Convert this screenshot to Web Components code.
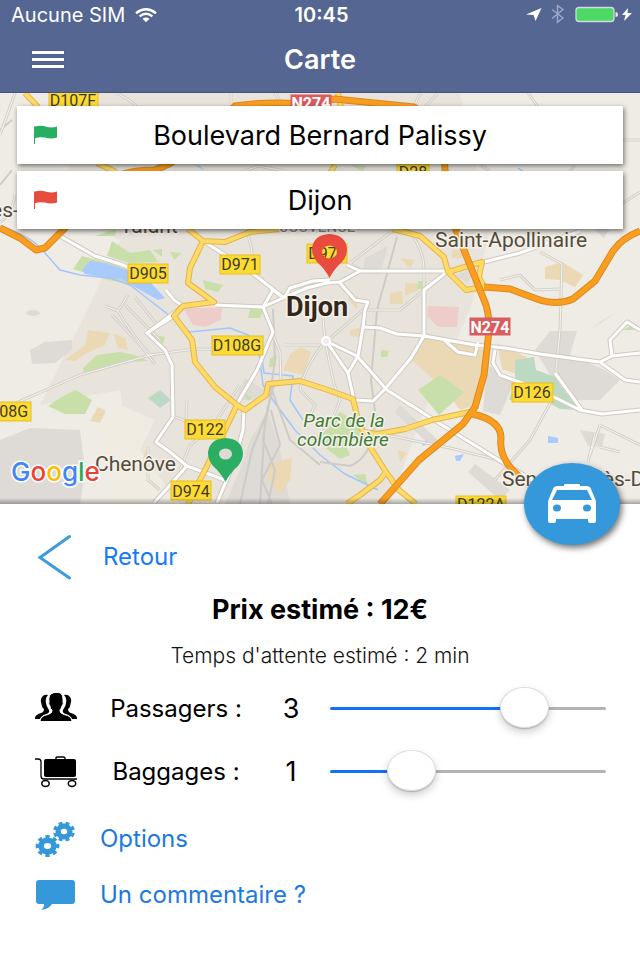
<!DOCTYPE html>
<html lang="fr">
<head>
<meta charset="utf-8">
<meta name="viewport" content="width=device-width, initial-scale=1">
<title>Carte</title>
<style>
  body { margin: 0; background: #fff; color: #000; font-family: Inter, "Liberation Sans", sans-serif; }
</style>
</head>
<body>
<taxi-app></taxi-app>

<script>
const define = (name, html, setup) => {
  const template = document.createElement('template');
  template.innerHTML = html;
  customElements.define(name, class extends HTMLElement {
    constructor() {
      super();
      this.attachShadow({ mode: 'open' }).append(template.content.cloneNode(true));
    }
    connectedCallback() { if (setup) setup(this, this.shadowRoot); }
  });
};

define('status-bar', `
<style>
  :host { display: grid; grid-template-columns: 1fr auto 1fr; align-items: center; height: 30px; padding: 0 8px 0 11px; font-size: 20px; line-height: 24px; color: #fff; }
  .side { display: flex; align-items: center; gap: 10px; }
  .end { justify-content: flex-end; }
  .time { font-weight: 600; }
  svg { display: block; }
</style>
<div class="side"><span>Aucune SIM</span>
  <svg width="22" height="15" viewBox="0 0 22 15" fill="none" stroke="#fff" stroke-width="2.4" aria-hidden="true"><path d="M1 5.2Q11-2.6 21 5.2M4.600 8.400Q11 3.200 17.400 8.400"/><path d="M7.500 10.800Q11 8 14.500 10.800L11 14.200Z" fill="#fff" stroke="none"/></svg>
</div>
<span class="time">10:45</span>
<div class="side end">
  <svg width="106" height="22" viewBox="0 3 106 22" aria-hidden="true">
    <path d="M0 13.500L15.500 7L9.500 20L7.600 14Z" fill="#fff"/>
    <path d="M26 8.500L37 17L31.500 21.300V4.700L37 8.500L26 17.500" fill="none" stroke="#9ba6cb" stroke-width="1.500"/>
    <rect x="50" y="6.500" width="38" height="14" rx="3" fill="#4cd964" stroke="#d3d8e8" stroke-width="1.300"/>
    <path d="M89.500 11Q92 11 92 13.500T89.500 16Z" fill="#e4e7f0"/>
    <path d="M102 7L96 14H99.500L98 20L106 12H101.500Z" fill="#fff"/>
  </svg>
</div>`);

define('nav-bar', `
<style>
  :host { display: grid; grid-template-columns: 64px 1fr 64px; align-items: center; height: 62px; padding-bottom: 3px; box-sizing: border-box; color: #fff; }
  button { display: flex; flex-direction: column; gap: 4px; width: 32px; margin-left: 32px; padding: 0; border: 0; background: none; cursor: pointer; }
  i { display: block; width: 100%; height: 3px; background: #fff; box-shadow: 0 0 1px #1d3f86; }
  h1 { margin: 0; text-align: center; font-size: 27px; line-height: 32px; font-weight: 600; }
</style>
<button aria-label="Menu"><i></i><i></i><i></i></button>
<h1><slot></slot></h1>`);

define('address-field', `
<style>
  :host { display: flex; align-items: center; height: 58px; padding: 0 17px; background: #fff; box-shadow: 1px 2px 5px rgba(0,0,0,.55); box-sizing: border-box; }
  svg { flex: none; color: var(--flag); }
  input { flex: 1; min-width: 0; height: 100%; padding: 0 24px 0 0; border: 0; outline: 0; background: none; font: inherit; font-size: 27px; text-align: center; color: #000; }
</style>
<svg width="24" height="20" viewBox="0 0 24 20" aria-hidden="true"><path d="M.5 19V1.500" stroke="currentColor"/><path d="M1 1.500Q7 0 13 2Q18 3.200 23 1.500V12.500Q17 14.500 11 12.500Q5 11.500 1 13.200Z" fill="currentColor"/></svg>
<input>`, (host, root) => {
  const input = root.querySelector('input');
  input.value = host.getAttribute('value');
  input.setAttribute('aria-label', host.getAttribute('label'));
});

define('city-map', `
<style>
  :host { display: block; position: relative; min-height: 412px; overflow: hidden; background: #ece8e0; border-top: 1px solid #43527f; box-sizing: border-box; }
  svg { position: absolute; inset: 0; width: 100%; height: 100%; }
  .fields { position: relative; display: grid; gap: 7px; padding: 13px 17px; }
  text { font-family: Roboto, "Liberation Sans", sans-serif; }
  .badge rect { fill: #fddb31; stroke: #e5bd24; }
  .badge text { font-size: 16px; fill: #3e3b2b; text-anchor: middle; }
  .badge .red { fill: #d95c5f; stroke: #d95c5f; }
  .badge .white { fill: #fff; font-weight: 700; }
  .place { font-size: 21px; fill: #554b3c; stroke: #f4f1ea; stroke-width: 3px; paint-order: stroke; }
  .city { font-size: 27px; font-weight: 700; fill: #332719; }
  .park { font-size: 19px; font-style: italic; fill: #3f7c35; text-anchor: middle; }
  .google { font-family: Inter, sans-serif; font-size: 26px; font-weight: 500; stroke: #fff; stroke-width: 3px; paint-order: stroke; }
  .edge { fill: none; stroke-linejoin: round; }
</style>
<svg viewBox="0 93 640 411" preserveAspectRatio="xMidYMid slice" role="img" aria-label="Carte de Dijon">
  <defs>
    <g id="minor">
      <path d="M15 93L0 135M117 93L132 102L140 110M231 93V107M275 93L284 107M425 107L438 93M415 107Q417 96 422 93M528 93L538 107M620 140H640M245 171L258 166L285 171M480 165L490 171M570 171L575 165M15 195Q12 215 0 222"/>
      <path d="M246 229Q252 245 253 260L258 277M395 229L350 263M408 229Q424 250 424 268L424 288M350 263L360 270M620 205L640 192M540 252L562 264L560 330L556 370L568 395"/>
      <path d="M112 315L140 345L155 364M118 311Q135 340 154 358M125 305L160 340M135 297L157 325M105 306L118 311L128 295M0 410L80 375L150 355L195 349L240 350L265 345"/>
      <path d="M173 416L186 421L187 400M148 446L148 480L160 490M240 385L210 430L190 445L180 470M285 345H320M281 384L280 352L273 335M325 341Q303 370 300 390L315 405L308 420M334 384L325 341L323 318M327 341L363 310M334 384L340 400L330 425L315 440"/>
      <path d="M362 430L450 448L510 463M552 400L530 440L495 480M640 445L600 425M595 433L588 462M600 425L590 455M620 452L600 447M365 310H400L424 290M500 280L520 275L535 290L560 289"/>
    </g>
    <g id="white">
      <path d="M60 236L95 256L120 264L160 280M166 290L174 300L183 306M215 305L263 307L283 298L307 288L327 283L340 282L360 271L448 271M183 306L146 334M174 316L147 333L165 350L172 365L173 417L156 442L170 452L187 466L225 480M203 241L225 255L256 276L284 298M273 290L263 307L273 332L257 370L237 404M244 409L243 430L235 460L217 503M187 466L154 503"/>
      <path d="M284 298L290 288L313 281L330 280M273 290L284 298M340 283L355 300L368 302L365 310L363 327L358 356L348 373L354 400L373 401L385 389L411 358L424 336L424 290L448 271M347 265L360 271"/>
      <path d="M363 327L380 328L397 334L424 336L475 345L505 348L540 354L600 362L612 356L640 353M600 362L625 380L640 382M326 341L357 356L387 390L450 430L510 467L555 493M326 341L348 373M484 262L520 253L580 231M444 340L458 352L475 355L478 342M495 350L493 363L500 375L535 388L560 400L580 410L602 414L640 410M555 373L582 410M612 356L610 340L627 322L640 330"/>
    </g>
    <g id="yellow">
      <path d="M25 93L38 107M97 163L116 172M338 93L341 107M335 165L330 173M188 229L203 241L190 268L188 283L214 302L183 306L174 316L192 340L195 362L215 387L237 405L225 430L203 474L188 504M203 241L225 242L250 232L280 229M237 405L245 410L266 395L268 384L300 381L325 389L353 399L358 420L370 447L386 472L399 490L416 504M363 432L378 434L405 429L432 420L470 412M386 472L380 480L360 495L347 504M393 229L420 236L444 257L448 272L482 262L479 277L484 287L466 290L448 272"/>
    </g>
    <g id="orange">
      <path d="M0 228L20 238L36 250L45 248L64 229L110 180Q125 170 155 170L171 163L235 106Q270 101 300 104L335 99L414 107Q445 125 445 170L456 230L484 300Q491 315 488 340L484 375L475 407L463 424L419 460L380 504M484 287L510 289L537 299Q557 306 573 299L595 281L613 251Q622 238 640 231M472 414Q501 420 501 438Q498 461 524 480L545 500"/>
    </g>
  </defs>
  <rect y="93" width="640" height="411" fill="#efece5"/>
  <path d="M75 93H460L490 230L470 310L420 420L390 504H180L130 455L120 390L40 405L85 315L120 240L65 210Z" fill="#e8e4dc"/>
  <path d="M120 405L155 420L140 450L165 485V504H110V455L95 430Z" fill="#f0ece2"/>
  <g fill="#dedad5">
    <path d="M0 440L30 428L80 430L85 470L80 504H0Z"/>
    <path d="M30 350L45 342L72 340V350L55 363L32 364Z"/><ellipse cx="33" cy="313" rx="7" ry="3"/><path d="M245 378L265 390L255 400H235ZM250 440L268 410L280 450L290 504H225L240 470ZM550 331H577L570 355L605 370L620 380L600 400L565 400L535 350ZM487 365L515 380L500 415L483 411ZM475 464L510 490L500 500L468 472ZM580 430L605 434L602 447L588 446ZM365 258L388 246L380 275L363 270ZM595 230L612 225L604 238ZM455 275L475 268L468 283ZM400 405L440 442L430 445L395 413Z"/>
  </g>
  <g fill="#ead9b4">
    <path d="M88 330L110 333L105 345L85 354L75 361L65 360L85 345ZM113 333L125 338L128 350L118 348ZM98 407L106 411L100 423L90 421ZM145 450L150 455L143 460ZM290 354L300 347L311 352L304 375L283 370ZM270 463L292 458L290 480L280 495L267 478ZM427 333L490 352L485 372L476 405L460 410L445 390L412 360ZM497 343L510 350L527 357L519 375L502 369ZM405 283H419L418 290L405 296ZM390 293L402 291L403 304H390ZM452 250H463V258H452ZM400 258L415 260L410 268ZM398 450L407 453L400 462ZM620 310L600 322L590 330ZM545 267L562 262L583 275L575 287L560 280L545 279ZM347 298L358 296L357 310ZM350 330L362 327L360 337L350 336Z"/>
  </g>
  <g fill="#c8dfaa">
    <path d="M83 368L97 355L120 352L135 355L148 361L118 363L97 372L84 373ZM48 406L65 395L76 390L92 400L85 414L65 414ZM107 256L112 241L130 253L150 250L158 262L130 263ZM73 269L82 256L120 266L150 282L142 285L108 280ZM95 236L116 229L115 236ZM153 250L162 249V257ZM170 252L182 253L174 260ZM203 280L223 285L218 292L205 289ZM150 334L165 337L163 344ZM250 308L263 310L260 318H248ZM418 390L440 375L464 392L439 415ZM381 350L389 351L387 357H381ZM418 281H427L424 289H417ZM322 427L340 412L350 418L365 435L345 444L350 455L340 459L322 445ZM353 475L365 474L368 486ZM350 165L367 166L362 171ZM270 358L277 355L275 367H269ZM243 393L252 397L248 401ZM622 330L635 324L638 330Z"/>
  </g>
  <path d="M515 360L534 357L536 370L555 377L563 390L580 410L560 409L540 398L509 400L515 382ZM148 398L160 390L171 400L160 408Z" fill="#bcd9c1"/>
  <path d="M183 308L222 308L221 320L205 327L193 325ZM428 306L459 307L457 327H438L427 316Z" fill="#edccca"/>
  <g fill="#a8caff">
    <path d="M82 270L90 261L105 263L127 270L150 282L165 298L158 300L142 291L121 279L85 274Z"/>
    <path d="M422 443L427 440V444L423 446ZM455 456L464 454L460 461H456ZM548 436L558 438V443H548ZM195 165L205 171L200 166Z"/>
  </g>
  <g fill="none" stroke="#a2c6fb" stroke-width="1.500">
    <path d="M0 226Q32 236 45 253L60 270L80 275L110 278L130 285L143 295L170 316L190 332L230 328L248 335L258 345L263 385L275 403L295 430L320 455L345 474L378 490M262 357L264 373L293 376L290 400L303 420"/>
    <path d="M518 168L524 172"/>
  </g>
  <g fill="none" stroke="#cecbc6" stroke-width="2">
    <path d="M397 237L388 270L377 310L371 380L376 420L372 440Q365 460 350 466L320 462M273 309L275 360L268 410L252 450L240 504M275 380L265 420L260 504M271 410L280 445L262 480L272 504M268 405L263 440L275 470L268 504M272 390L290 440L320 465M0 185L12 170M0 130L12 120"/>
  </g>
  <use href="#minor" class="edge" stroke="#d4cfc8" stroke-width="3"/>
  <use href="#minor" class="edge" stroke="#f7f5f0" stroke-width="1"/>
  <use href="#white" class="edge" stroke="#cfc9c1" stroke-width="5"/>
  <use href="#white" class="edge" stroke="#fff" stroke-width="3"/>
  <circle cx="326" cy="341" r="4" fill="#eee" stroke="#fff" stroke-width="2"/>
  <use href="#yellow" class="edge" stroke="#e1b54b" stroke-width="6"/>
  <use href="#yellow" class="edge" stroke="#ffda66" stroke-width="4"/>
  <use href="#orange" class="edge" stroke="#d98a20" stroke-width="7"/>
  <use href="#orange" class="edge" stroke="#fb9e20" stroke-width="5"/>

  <g class="badge">
    <rect x="49" y="92" width="49" height="18"/><text x="73" y="106">D107F</text>
    <rect class="red" x="291" y="95" width="40" height="18"/><text class="white" x="311" y="109">N274</text>
    <rect x="397" y="164" width="32" height="18"/><text x="413" y="178">D28</text>
    <rect x="128" y="264" width="40" height="19"/><text x="148" y="279">D905</text>
    <rect x="220" y="255" width="40" height="19"/><text x="240" y="270">D971</text>
    <rect x="307" y="244" width="40" height="19"/><text x="327" y="259">D974</text>
    <rect x="212" y="336" width="51" height="19"/><text x="237" y="351">D108G</text>
    <rect x="-20" y="402" width="51" height="19"/><text x="4" y="417">D108G</text>
    <rect x="185" y="420" width="40" height="19"/><text x="205" y="435">D122</text>
    <rect x="171" y="481" width="40" height="19"/><text x="191" y="497">D974</text>
    <rect x="512" y="383" width="41" height="19"/><text x="532" y="398">D126</text>
    <rect class="red" x="470" y="318" width="40" height="17"/><text class="white" x="490" y="333">N274</text>
    <rect x="456" y="496" width="50" height="19"/><text x="481" y="510">D122A</text>
  </g>
  <text class="place" x="-9" y="217">es-</text>
  <text class="place" x="120" y="233">Talant</text>
  <text class="place" x="280" y="232" style="font-size:15px;fill:#8b867e">JOUVENCE</text>
  <text class="place" x="435" y="247">Saint-Apollinaire</text>
  <text class="place city" x="286" y="316">Dijon</text>
  <text class="place" x="95" y="471">Chenôve</text>
  <text class="place" x="502" y="486">Sennecey-lès-Dijon</text>
  <text class="place park" x="344" y="427">Parc de la</text>
  <text class="place park" x="343" y="446">colombière</text>
  <text class="google" x="11" y="481"><tspan fill="#4285f4">G</tspan><tspan fill="#ea4335">o</tspan><tspan fill="#fbbc05">o</tspan><tspan fill="#4285f4">g</tspan><tspan fill="#34a853">l</tspan><tspan fill="#ea4335">e</tspan></text>

  <path fill-rule="evenodd" fill="#e94b3c" d="M329.500 278Q325 269 317 262Q312 256 312 249Q313 235 329.500 234Q346 235 347 249Q347 256 342 262Q334 269 329.500 278ZM322 252A7.500 6.500 0 0 0 337 252A7.500 6.500 0 0 0 322 252Z"/>
  <path fill="#2bae63" d="M225.500 482Q221 473 213 466Q208 460 208 453Q209 439 225.500 438Q242 439 243 453Q243 460 238 466Q230 473 225.500 482Z"/>
  <ellipse cx="225.500" cy="454" rx="6.500" ry="5.500" fill="#ddd9d3"/>
  <linearGradient id="shade" x2="0" y2="1"><stop stop-opacity="0"/><stop offset="1" stop-opacity=".3"/></linearGradient>
  <rect y="498" width="640" height="6" fill="url(#shade)"/>
</svg>
<div class="fields"><slot></slot></div>`);

define('taxi-button', `
<style>
  :host { display: block; width: 96px; height: 82px; }
  button { display: grid; place-items: center; width: 100%; height: 100%; padding: 0; border: 0; border-radius: 50%; background: #3498db; box-shadow: 2px 3px 6px rgba(0,0,0,.55); cursor: pointer; }
</style>
<button aria-label="Commander un taxi"><svg width="50" height="40" viewBox="0 0 50 40" aria-hidden="true">
  <path fill="#fff" fill-rule="evenodd" d="M17 1Q17 0 19 0H31Q33 0 33 1V2H39Q43 2 44 5L49 17V37Q49 39 47 39H43Q41 39 41 37V35H9V37Q9 39 7 39H3Q1 39 1 37V17L6 5Q7 2 11 2H17ZM10 6L5 16H45L40 6ZM6 24A4 3.500 0 0 0 14 24A4 3.500 0 0 0 6 24ZM36 24A4 3.500 0 0 0 44 24A4 3.500 0 0 0 36 24Z"/></svg></button>`);

define('price-summary', `
<style>
  :host { display: block; text-align: center; }
  h2 { margin: 0; font-size: 27px; line-height: 50px; font-weight: 700; }
  p { margin: 0; font-size: 21px; line-height: 42px; font-weight: 300; color: #111; }
</style>
<h2><slot name="price"></slot></h2>
<p><slot name="wait"></slot></p>`);

define('count-slider', `
<style>
  :host { display: grid; grid-template-columns: 42px 166px 32px 1fr; column-gap: 16px; align-items: center; height: 63px; padding: 0 34px 0 35px; }
  ::slotted(svg) { display: block; }
  label { text-align: center; font-size: 24px; line-height: 28px; }
  output { text-align: center; font-size: 27px; line-height: 28px; }
  input { -webkit-appearance: none; appearance: none; width: auto; height: 42px; margin: 0 0 0 7px; background: none; }
  input::-webkit-slider-runnable-track { height: 3px; border-radius: 2px; background: linear-gradient(to right, #1570f8 var(--fill), #b4b4b4 var(--fill)); }
  input::-webkit-slider-thumb { -webkit-appearance: none; box-sizing: border-box; width: 49px; height: 41px; margin-top: -20px; border: 1px solid #ddd; border-radius: 50%; background: #fff; box-shadow: 0 4px 8px rgba(0,0,0,.2), 0 1px 1px rgba(0,0,0,.2); }
</style>
<slot></slot>
<label for="range"></label>
<output for="range"></output>
<input id="range" type="range" min="0" max="4">`, (host, root) => {
  const input = root.querySelector('input');
  const output = root.querySelector('output');
  root.querySelector('label').textContent = host.getAttribute('label');
  input.value = host.getAttribute('value');
  const update = () => {
    output.textContent = input.value;
    input.style.setProperty('--fill', (input.value / input.max * 100) + '%');
  };
  input.addEventListener('input', update);
  update();
});

define('action-row', `
<style>
  :host { display: block; padding: 0 35px; }
  button { display: flex; align-items: center; gap: 24px; height: 56px; padding: 0; border: 0; background: none; font: inherit; font-size: 24px; line-height: 28px; color: #1c79de; cursor: pointer; }
  :host([back]) button { color: #167bfb; gap: 28px; }
  ::slotted(svg) { display: block; flex: none; }
</style>
<button><slot name="icon"></slot><span><slot></slot></span></button>`);

define('taxi-app', `
<style>
  :host { display: block; }
  header { background: #546691; }
  .panel { position: relative; padding-top: 25px; padding-bottom: 24px; background: #fff; }
  taxi-button { position: absolute; top: -41px; right: 20px; }
  .actions { margin-top: 8px; }
  .from { --flag: #27ae60; }
  .to { --flag: #e74c3c; }
</style>
<header>
  <status-bar></status-bar>
  <nav-bar>Carte</nav-bar>
</header>
<main>
  <city-map>
    <address-field class="from" label="Départ" value="Boulevard Bernard Palissy"></address-field>
    <address-field class="to" label="Arrivée" value="Dijon"></address-field>
  </city-map>
  <section class="panel">
    <taxi-button></taxi-button>
    <action-row back><svg slot="icon" width="40" height="46" viewBox="0 0 40 46" fill="none" stroke="#3c9cdd" stroke-width="3" stroke-linecap="round" aria-hidden="true"><path d="M34.500 2.500L5 23.500L34.500 44"/></svg>Retour</action-row>
    <price-summary><span slot="price">Prix estimé : 12€</span><span slot="wait">Temps d'attente estimé : 2 min</span></price-summary>
    <count-slider label="Passagers :" value="3"><svg width="42" height="32" viewBox="0 2 42 32" aria-hidden="true">
      <path d="M13 4Q9 3 7 6Q5 9 6.500 13Q7 17 9 18Q9 21 6 22Q0 24 0 27V28H5Q6 25 11 23Q15 22 14 19Q11 15 11 12Q10 7 13 4Z"/>
      <path transform="matrix(-1 0 0 1 42 0)" d="M13 4Q9 3 7 6Q5 9 6.500 13Q7 17 9 18Q9 21 6 22Q0 24 0 27V28H5Q6 25 11 23Q15 22 14 19Q11 15 11 12Q10 7 13 4Z"/>
      <path stroke="#fff" d="M21 1Q28 1 28 8Q28 10 28 11Q29 13 27 15Q26 18 25 19Q24 22 29 23.500Q37 25 37 30.500H5Q5 25 13 23.500Q18 22 17 19Q15 18 15 15Q13 13 14 11Q13 3 18 2Q19 1 21 1Z"/></svg></count-slider>
    <count-slider label="Baggages :" value="1"><svg width="42" height="32" viewBox="0 0 42 32" aria-hidden="true">
      <path fill="none" stroke="#000" stroke-width="1.300" d="M0 3H3Q6 3 6 6V20Q6 23 9 23H42"/>
      <rect x="9" y="3" width="32" height="18" rx="2"/><path fill="none" stroke="#000" stroke-width="1.400" d="M21 4V2Q21 1 22 1H28Q30 1 30 2V4"/>
      <g fill="none" stroke="#000" stroke-width="1.500"><ellipse cx="10.500" cy="27.500" rx="3.700" ry="3"/><ellipse cx="37" cy="27.500" rx="3.700" ry="3"/></g></svg></count-slider>
    <div class="actions">
      <action-row><svg slot="icon" width="41" height="36" viewBox="0 0 41 36" fill="none" stroke="#3498db" aria-hidden="true">
        <ellipse cx="12.500" cy="25" rx="6.400" ry="5.800" stroke-width="5.600"/><ellipse cx="12.500" cy="25" rx="10.200" ry="9.200" pathLength="80" stroke-width="3.400" stroke-dasharray="5.500 4.500" stroke-dashoffset="2.750"/>
        <ellipse cx="29" cy="10.500" rx="5.900" ry="5.300" stroke-width="5.200"/><ellipse cx="29" cy="10.500" rx="9.400" ry="8.400" pathLength="80" stroke-width="3.200" stroke-dasharray="5.500 4.500" stroke-dashoffset="-2.250"/></svg>Options</action-row>
      <action-row><svg slot="icon" width="41" height="30" viewBox="0 0 41 30" aria-hidden="true"><path fill="#3498db" d="M4 0H37Q40 0 40 3V21Q40 24 37 24H17Q14 29 6 30Q9 28 9 24H4Q1 24 1 21V3Q1 0 4 0Z"/></svg>Un commentaire ?</action-row>
    </div>
  </section>
</main>`);
</script>
</body>
</html>
